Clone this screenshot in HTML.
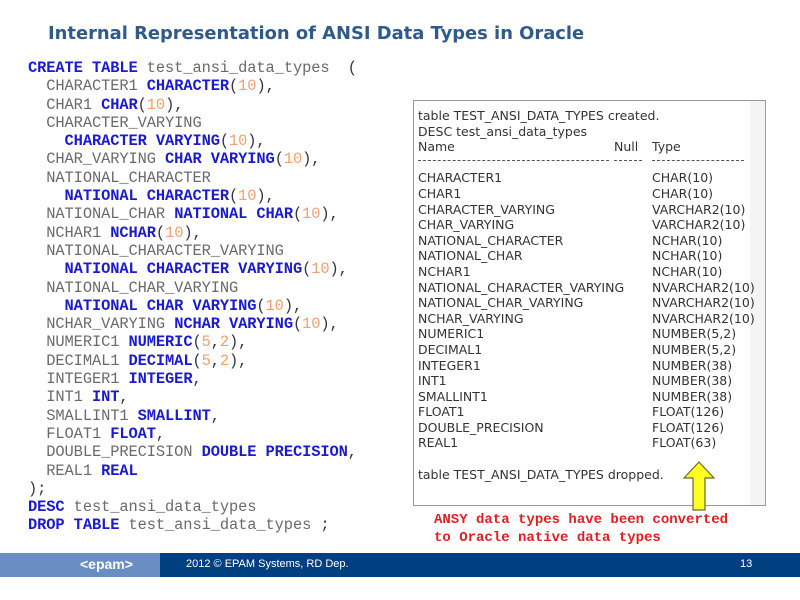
<!DOCTYPE html>
<html><head><meta charset="utf-8"><style>
body{margin:0;width:800px;height:600px;background:#fff;position:relative;overflow:hidden;font-family:"Liberation Sans",sans-serif}
.t{position:absolute;left:48px;top:23px;font-family:"DejaVu Sans",sans-serif;font-size:17.9px;font-weight:bold;color:#2f5b8c}
.code{position:absolute;left:28px;top:59px;font-family:"Liberation Mono",monospace;font-size:15.4px;line-height:18.3px;color:#6a6a6a;white-space:pre;letter-spacing:-0.1px}
.k{color:#1a1ad0;font-weight:bold}.n{color:#f0a070}.p{color:#334}
.box{position:absolute;left:413px;top:100px;width:351px;height:404px;border:1px solid #999;background:#fff}
.sb{position:absolute;right:0;top:0;width:15px;height:100%;background:#f4f4f4}
.col{position:absolute;top:7px;font-family:"DejaVu Sans",sans-serif;font-size:12.5px;line-height:15.6px;color:#333;white-space:pre}
.red{position:absolute;left:434px;top:511px;font-family:"Liberation Mono",monospace;font-weight:bold;font-size:14px;line-height:18px;color:#e02020;white-space:pre}
.f1{position:absolute;left:0;top:553px;width:160px;height:24px;background:#6a8ec4}
.f2{position:absolute;left:160px;top:553px;width:640px;height:24px;background:#003f80}
.ft{position:absolute;top:558px;color:#fff;font-size:11px}
</style></head><body>
<div class="t">Internal Representation of ANSI Data Types in Oracle</div>
<div class="code"><span class="k">CREATE TABLE</span> test_ansi_data_types  <span class="p">(</span>
  CHARACTER1 <span class="k">CHARACTER</span><span class="p">(</span><span class="n">10</span><span class="p">),</span>
  CHAR1 <span class="k">CHAR</span><span class="p">(</span><span class="n">10</span><span class="p">),</span>
  CHARACTER_VARYING
    <span class="k">CHARACTER VARYING</span><span class="p">(</span><span class="n">10</span><span class="p">),</span>
  CHAR_VARYING <span class="k">CHAR VARYING</span><span class="p">(</span><span class="n">10</span><span class="p">),</span>
  NATIONAL_CHARACTER
    <span class="k">NATIONAL CHARACTER</span><span class="p">(</span><span class="n">10</span><span class="p">),</span>
  NATIONAL_CHAR <span class="k">NATIONAL CHAR</span><span class="p">(</span><span class="n">10</span><span class="p">),</span>
  NCHAR1 <span class="k">NCHAR</span><span class="p">(</span><span class="n">10</span><span class="p">),</span>
  NATIONAL_CHARACTER_VARYING
    <span class="k">NATIONAL CHARACTER VARYING</span><span class="p">(</span><span class="n">10</span><span class="p">),</span>
  NATIONAL_CHAR_VARYING
    <span class="k">NATIONAL CHAR VARYING</span><span class="p">(</span><span class="n">10</span><span class="p">),</span>
  NCHAR_VARYING <span class="k">NCHAR VARYING</span><span class="p">(</span><span class="n">10</span><span class="p">),</span>
  NUMERIC1 <span class="k">NUMERIC</span><span class="p">(</span><span class="n">5</span><span class="p">,</span><span class="n">2</span><span class="p">),</span>
  DECIMAL1 <span class="k">DECIMAL</span><span class="p">(</span><span class="n">5</span><span class="p">,</span><span class="n">2</span><span class="p">),</span>
  INTEGER1 <span class="k">INTEGER</span><span class="p">,</span>
  INT1 <span class="k">INT</span><span class="p">,</span>
  SMALLINT1 <span class="k">SMALLINT</span><span class="p">,</span>
  FLOAT1 <span class="k">FLOAT</span><span class="p">,</span>
  DOUBLE_PRECISION <span class="k">DOUBLE PRECISION</span><span class="p">,</span>
  REAL1 <span class="k">REAL</span>
<span class="p">);</span>
<span class="k">DESC</span> test_ansi_data_types
<span class="k">DROP TABLE</span> test_ansi_data_types <span class="p">;</span></div>
<div class="box"><div class="sb"></div>
<div class="col" style="left:4px">table TEST_ANSI_DATA_TYPES created.
DESC test_ansi_data_types
Name

CHARACTER1
CHAR1
CHARACTER_VARYING
CHAR_VARYING
NATIONAL_CHARACTER
NATIONAL_CHAR
NCHAR1
NATIONAL_CHARACTER_VARYING
NATIONAL_CHAR_VARYING
NCHAR_VARYING
NUMERIC1
DECIMAL1
INTEGER1
INT1
SMALLINT1
FLOAT1
DOUBLE_PRECISION
REAL1

table TEST_ANSI_DATA_TYPES dropped.</div>
<div class="col" style="left:200px">

Null</div>
<div class="col" style="left:238px">

Type

CHAR(10)
CHAR(10)
VARCHAR2(10)
VARCHAR2(10)
NCHAR(10)
NCHAR(10)
NCHAR(10)
NVARCHAR2(10)
NVARCHAR2(10)
NVARCHAR2(10)
NUMBER(5,2)
NUMBER(5,2)
NUMBER(38)
NUMBER(38)
NUMBER(38)
FLOAT(126)
FLOAT(126)
FLOAT(63)</div>
<div style="position:absolute;top:59px;left:4px;width:191px;border-top:1px dashed #555"></div>
<div style="position:absolute;top:59px;left:200px;width:28px;border-top:1px dashed #555"></div>
<div style="position:absolute;top:59px;left:238px;width:92px;border-top:1px dashed #555"></div>
</div>
<svg style="position:absolute;left:682px;top:461px" width="34" height="50"><path d="M17 1 L32 17 L23 17 L23 49 L11 49 L11 17 L2 17 Z" fill="#ffff20" stroke="#6a6a30" stroke-width="1.2"/></svg>
<div class="red">ANSY data types have been converted
to Oracle native data types</div>
<div class="f1"></div><div class="f2"></div>
<div class="ft" style="left:80px;top:556px;font-weight:bold;font-size:14px">&lt;epam&gt;</div>
<div class="ft" style="left:186px">2012 © EPAM Systems, RD Dep.</div>
<div class="ft" style="left:740px">13</div>
</body></html>
